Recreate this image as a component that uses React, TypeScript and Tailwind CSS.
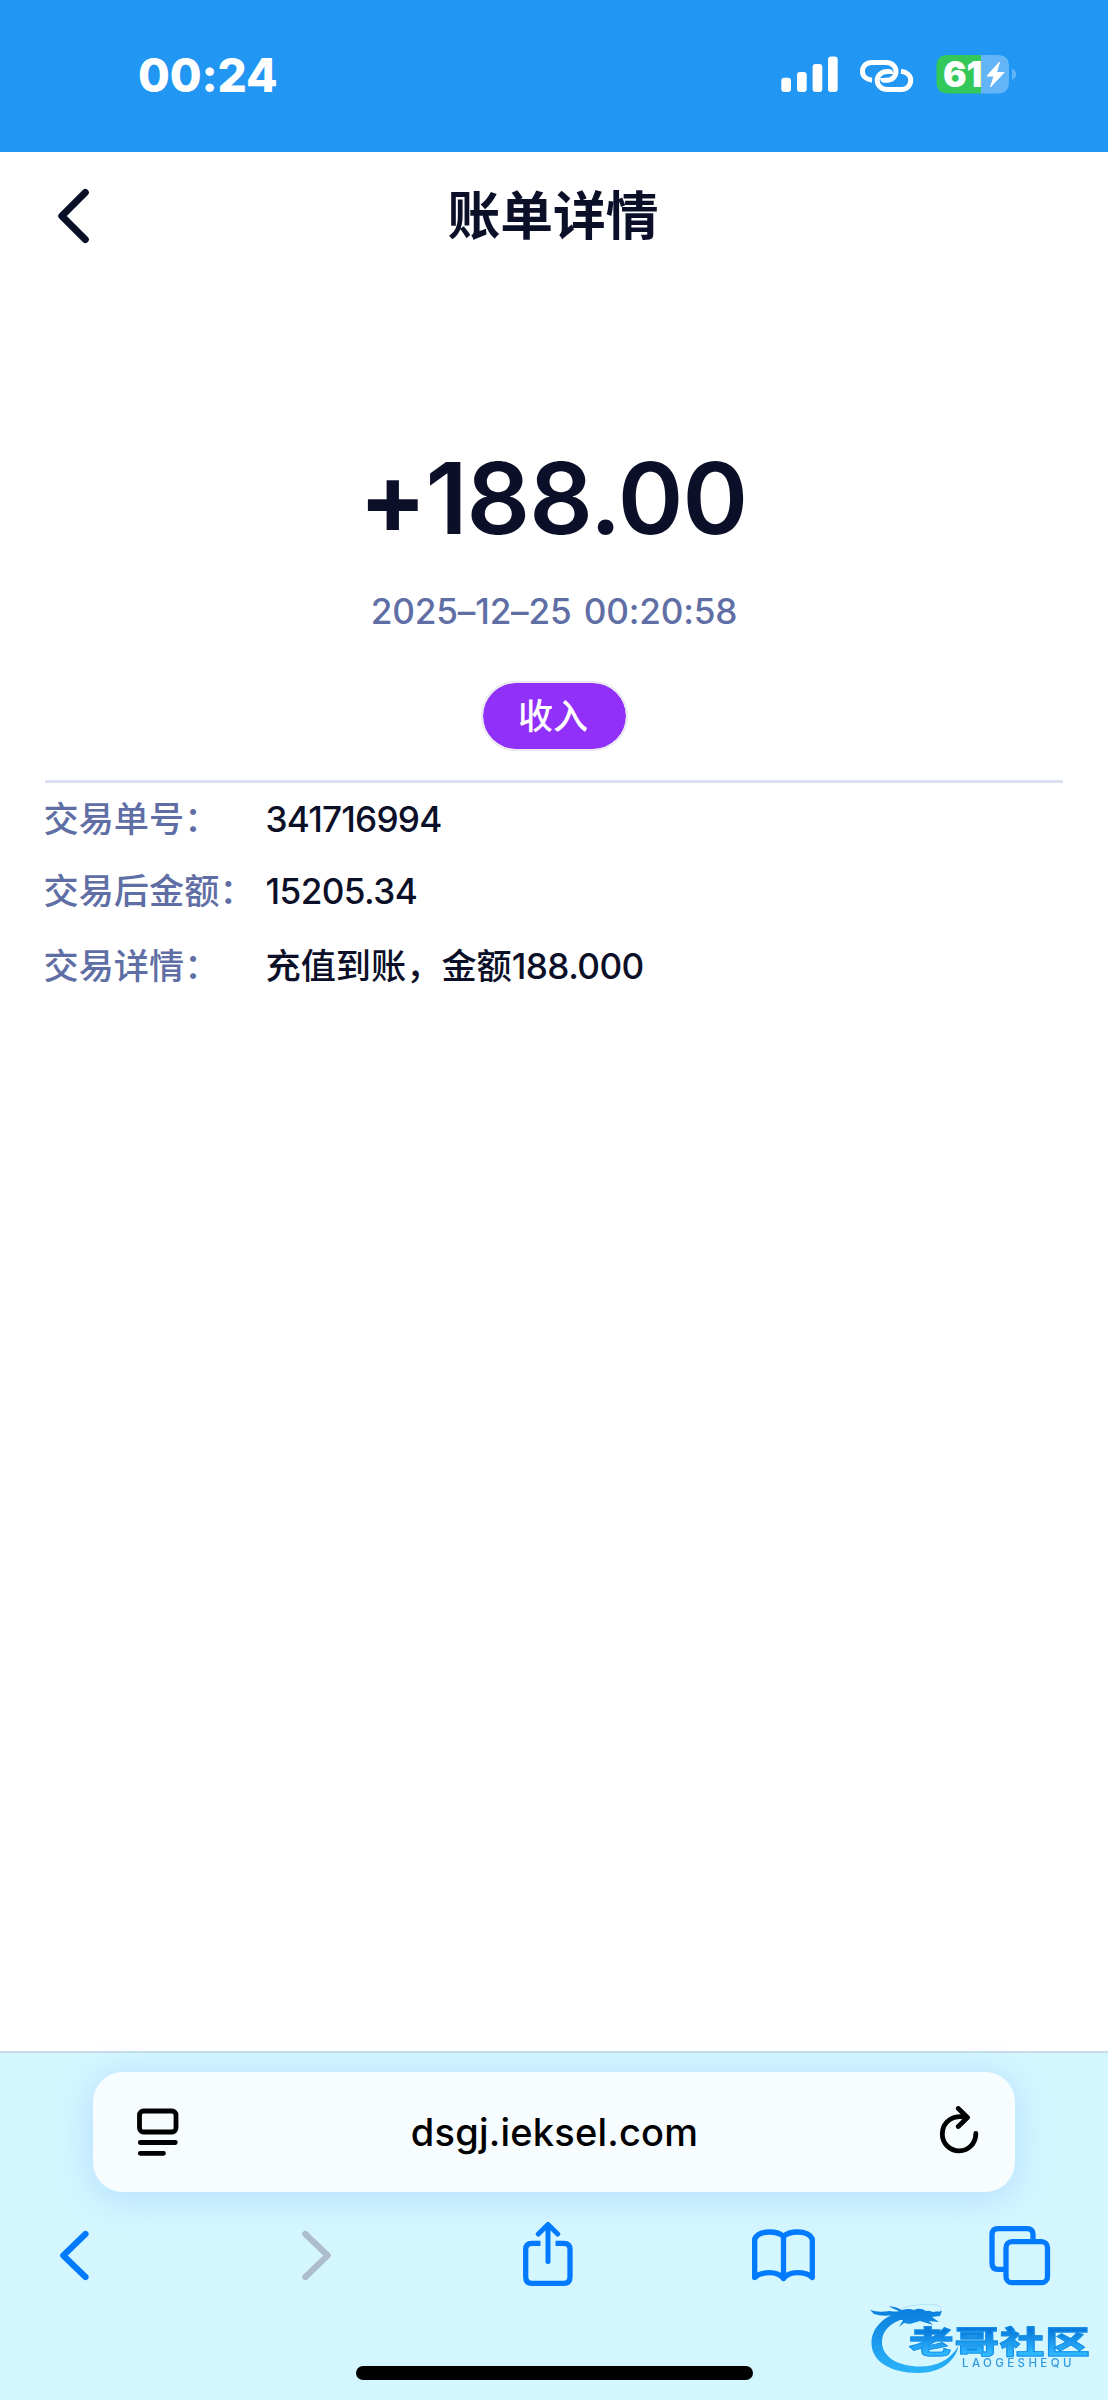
import type { ReactNode } from "react";

function StatusBar() {
  return (
    <header className="flex h-[152px] items-start bg-[#2196f3] pl-[138px] pr-[92px] text-white">
      <div className="mt-[47px] text-[46px] font-extrabold leading-[56px] tracking-[-0.1px]">00:24</div>
      <svg className="ml-auto mt-[47px] h-[56px] w-[236px] overflow-visible" viewBox="780 47 236 56" fill="none">
        <g fill="#fff">
          <rect x="781.3" y="77.7" width="9.7" height="14.3" rx="3" />
          <rect x="797" y="72" width="9.7" height="20" rx="3" />
          <rect x="812.6" y="64" width="9.7" height="28" rx="3" />
          <rect x="828" y="56.5" width="9.7" height="35.5" rx="3" />
        </g>
        <g stroke="#fff" strokeWidth="5">
          <path d="M872 80.2 C866 79.5 862.5 76 862.5 71.5 C862.5 66 866.5 62.5 872 62.5 H886 C892 62.5 896 66.5 896 71.5 C896 76.5 892 80.3 886 80.3 H884.5 Q882.6 80.3 882.6 78" />
          <path d="M901 71.3 C907 72 910.7 75.5 910.7 80.3 C910.7 85.8 906.5 89.5 901 89.5 H887.5 C881.5 89.5 877.2 85.5 877.2 80.3 C877.2 75.3 881.5 71.5 887.5 71.5 H888.7 Q890.7 71.5 890.7 74" />
        </g>
        <path d="M948 55 H981 V93.5 H948 Q936.5 93.5 936.5 82 V66.5 Q936.5 55 948 55Z" fill="#34c759" />
        <path d="M981 55 H997.5 Q1009 55 1009 66.5 V82 Q1009 93.5 997.5 93.5 H981Z" fill="#64b5f7" />
        <path d="M1012 68.5 Q1016 70 1016 74.3 Q1016 78.5 1012 80Z" fill="#64b5f7" />
        <text x="943" y="86.8" fill="#fff" fontFamily="Inter" fontWeight="900" fontSize="35" letterSpacing="-0.2">61</text>
        <path d="M999.5 62 L987 76 H994 L990.5 87 L1004 72.5 H996.5 Z" fill="#fff" stroke="#fff" strokeLinejoin="round" />
      </svg>
    </header>
  );
}

function DetailRow({ label, children }: { label: string; children: ReactNode }) {
  return (
    <div className="flex items-center text-[35.2px] leading-[52px]">
      <dt className="ml-[-1.5px] w-[222px] whitespace-nowrap font-medium text-[#5f6fa5]">{label}</dt>
      <dd className="whitespace-nowrap font-medium">{children}</dd>
    </div>
  );
}

function Toolbar() {
  const line = {
    fill: "none",
    stroke: "#007aff",
    strokeWidth: 5.3,
    strokeLinecap: "round" as const,
    strokeLinejoin: "round" as const,
  };
  return (
    <nav className="mt-[30px] flex h-[66px] items-start pl-[59px]">
      <svg className="h-[66px] w-[31px]" viewBox="59 2222 31 66" {...line} strokeWidth={6.2}>
        <path d="M85.5 2234 L63.3 2255.5 L85.5 2277" />
      </svg>
      <svg className="ml-[211px] h-[66px] w-[32px]" viewBox="301 2222 32 66" {...line} stroke="#adbdcd" strokeWidth={6.2}>
        <path d="M305.3 2234 L327.7 2255.5 L305.3 2277" />
      </svg>
      <svg className="ml-[188px] h-[66px] w-[54px]" viewBox="521 2222 54 66" {...line} strokeWidth={5}>
        <path d="M548 2261.5 V2225 M538.3 2234 L548 2224.5 L557.7 2234" />
        <path strokeLinecap="butt" strokeWidth={5.3} d="M540.5 2243.4 H532 Q525.7 2243.4 525.7 2249.5 V2277 Q525.7 2283.3 532 2283.3 H563.8 Q570 2283.3 570 2277 V2249.5 Q570 2243.4 563.8 2243.4 H555.5" />
      </svg>
      <svg className="ml-[176px] h-[66px] w-[65px]" viewBox="751 2222 65 66" {...line}>
        <path d="M783.5 2236.5 Q779 2232 769.5 2232 Q758 2232 754.7 2239 V2277.5 Q760 2272.7 769.5 2272.7 Q779 2272.7 783.5 2278.5 Q788 2272.7 797.5 2272.7 Q807 2272.7 812.3 2277.5 V2239 Q809 2232 797.5 2232 Q788 2232 783.5 2236.5 V2278.5" />
      </svg>
      <svg className="ml-[171px] h-[66px] w-[66px]" viewBox="987 2222 66 66" {...line} strokeLinecap="butt">
        <rect x="1006" y="2241.7" width="41.5" height="41" rx="6" />
        <path d="M1006 2269.3 H998 Q992 2269.3 992 2263 V2234.7 Q992 2228.7 998 2228.7 H1027 Q1033 2228.7 1033 2234.7 V2241.7" />
      </svg>
    </nav>
  );
}

function Watermark() {
  return (
    <div className="absolute right-0 top-[2300px] h-[80px] w-[240px] blur-[0.5px]">
      <svg className="absolute left-0 top-px h-[80px] w-[240px]" viewBox="868 2300 240 80">
        <defs>
          <linearGradient id="dragon" x1="0" y1="2306" x2="0" y2="2372" gradientUnits="userSpaceOnUse">
            <stop offset="0" stopColor="#0a7ddd" />
            <stop offset="1" stopColor="#2ab4fb" />
          </linearGradient>
        </defs>
        <g fill="url(#dragon)">
          <path d="M900 2311 C882 2316 871.5 2328 871.5 2342 C871.5 2360 890 2372 918 2372 C940 2372 955 2361 958.5 2345 C950 2359 937 2365.5 920 2365.5 C898 2365.5 882 2356 882 2341 C882 2330 890 2322 903 2318 Z" />
          <path d="M870 2309 Q878 2312 890 2310 Q895 2311 899 2310 Q891 2307 889 2305 Q897 2306 902 2309 Q909 2307 914 2309 Q920 2306 926 2310 Q930 2309 932 2311 L942 2310 L940 2315 L932 2316 L939 2321 L929 2320 L933 2324 L920 2320 L910 2323 L904 2322 L899 2326 L903 2319 L892 2319 L895 2314 Q882 2316 874 2313Z" />
        </g>
        <path d="M902 2307 Q920 2302 937 2304 Q944 2307 939 2311" fill="none" stroke="#b5e3f8" strokeWidth="1" />
      </svg>
      <div className="absolute left-[41px] top-[26px] origin-left scale-x-[1.46] whitespace-nowrap bg-gradient-to-b from-[#087bdc] from-15% to-[#30b8ff] to-90% bg-clip-text text-[30.5px] font-black leading-[31px] tracking-[0.6px] text-transparent [-webkit-text-stroke:0.8px_#168fe8]">
        老哥社区
      </div>
      <div className="absolute left-[94px] top-[59px] text-[11.5px] font-medium leading-[9px] tracking-[3.4px] text-[#329be0]">
        LAOGESHEQU
      </div>
    </div>
  );
}

function BrowserChrome() {
  return (
    <footer className="flex h-[349px] flex-col border-t-2 border-[#c7dde8] bg-[#d4f6ff]">
      <div className="mx-[93px] mt-[19px] flex h-[120px] items-center rounded-[30px] bg-[#f7fcff] pl-[42px] pr-[35px] shadow-[0_5px_36px_rgba(90,150,255,0.26)]">
        <svg className="h-[50px] w-[46px]" viewBox="135 2107 46 50" fill="none" stroke="#000" strokeWidth="4.8" strokeLinecap="round">
          <rect x="139.5" y="2111" width="36.5" height="21" rx="4" />
          <path d="M140.3 2142.5 H175.3 M140.3 2153.3 H163.5" />
        </svg>
        <div className="flex-1 pr-[10px] text-center text-[38px] font-medium leading-[48px] tracking-[0.2px] text-black">dsgj.ieksel.com</div>
        <svg className="h-[52px] w-[42px]" viewBox="938 2106 42 52" fill="none" stroke="#000" strokeWidth="4.8" strokeLinecap="round" strokeLinejoin="round">
          <path d="M967 2117.5 C952 2114 942.3 2122.5 942.3 2134 C942.3 2143.5 949.8 2150.8 959.2 2150.8 C968.5 2150.8 975.8 2143.5 975.8 2133.5 M958.3 2108.5 L967.5 2117.5 L958.3 2126.5" />
        </svg>
      </div>
      <Toolbar />
      <div className="mx-auto mt-[78px] h-[14px] w-[397px] rounded-full bg-black" />
    </footer>
  );
}

export default function App() {
  return (
    <div className="relative flex h-[2400px] w-[1108px] flex-col overflow-hidden bg-white font-['Inter','Noto_Sans_CJK_SC',sans-serif] text-[#0b1028]">
      <StatusBar />
      <div className="flex h-[128px] items-center justify-between pl-[56px] pr-[58px]">
        <svg className="h-[60px] w-[36px]" viewBox="56 186 36 60" fill="none" stroke="#0b1028" strokeWidth="7" strokeLinecap="round" strokeLinejoin="round">
          <path d="M85.3 192.5 L61.8 216 L85.3 239.5" />
        </svg>
        <h1 className="text-[52.8px] font-bold leading-[64px]">账单详情</h1>
        <div className="w-[36px]" />
      </div>
      <main className="flex flex-1 flex-col px-[45px]">
        <div className="mt-[158px] pr-[2px] text-center text-[99.5px] font-semibold leading-[120px] tracking-[-1px] [font-feature-settings:'calt'_0]">
          <span className="font-bold tracking-[-1px]">+</span>188.00
        </div>
        <div className="mt-[31px] text-center text-[35.2px] font-[450] leading-[44px] tracking-[-0.2px] text-[#5f6fa5] [word-spacing:3px]">2025–12–25 00:20:58</div>
        <div className="mx-auto mt-[48px] flex h-[70px] w-[147px] items-center justify-center rounded-full border-2 border-[#e9e9ef] bg-[#9130f8] bg-clip-padding pr-[2px] text-[35px] font-medium leading-[44px] text-white">
          收入
        </div>
        <div className="mt-[29px] h-[3px] bg-[#dde0f0]" />
        <dl className="flex flex-col pt-[10px]">
          <DetailRow label="交易单号：">
            <span className="tracking-[-0.8px]">341716994</span>
          </DetailRow>
          <div className="mb-[23px] mt-[20px]">
            <DetailRow label="交易后金额：">
              <span className="tracking-[-0.6px]">15205.34</span>
            </DetailRow>
          </div>
          <DetailRow label="交易详情：">
            充值到账，金额<span className="tracking-[-0.6px]">188.000</span>
          </DetailRow>
        </dl>
      </main>
      <BrowserChrome />
      <Watermark />
    </div>
  );
}
